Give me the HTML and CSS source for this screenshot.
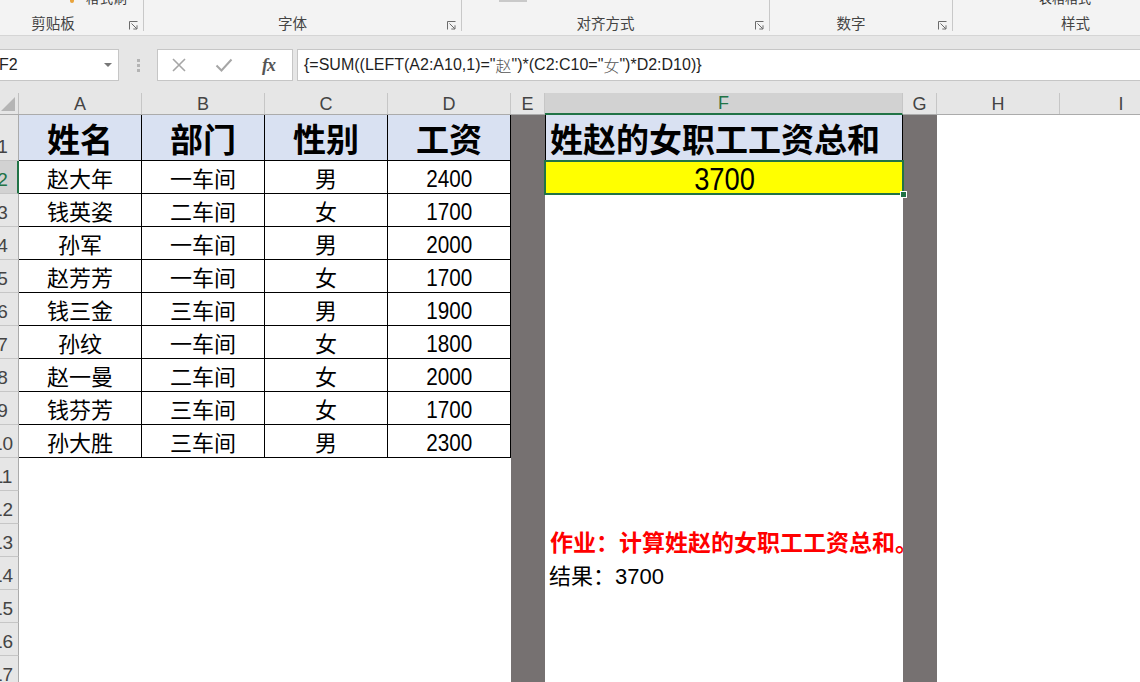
FILE: index.html
```html
<!DOCTYPE html>
<html lang="zh-CN">
<head>
<meta charset="utf-8">
<title>Excel</title>
<link rel="stylesheet" href="styles.css">
</head>
<body>
<div class="ribbon">
  <div class="group g1">
    <div class="gtop"><span class="cut dot1">·</span><span class="brush"></span><span class="cut brush-t">格式刷</span></div>
    <div class="glabel"><span class="lbl">剪贴板</span><svg class="launch" viewBox="0 0 9 9"><path d="M0.5 8.5V0.5H8.5" /><path d="M2.5 2.5L7.8 7.8M8 4.3V8H4.3" /></svg></div>
  </div>
  <div class="group g2">
    <div class="gtop"></div>
    <div class="glabel"><span class="lbl">字体</span><svg class="launch" viewBox="0 0 9 9"><path d="M0.5 8.5V0.5H8.5" /><path d="M2.5 2.5L7.8 7.8M8 4.3V8H4.3" /></svg></div>
  </div>
  <div class="group g3">
    <div class="gtop"><span class="bar3"></span></div>
    <div class="glabel"><span class="lbl">对齐方式</span><svg class="launch" viewBox="0 0 9 9"><path d="M0.5 8.5V0.5H8.5" /><path d="M2.5 2.5L7.8 7.8M8 4.3V8H4.3" /></svg></div>
  </div>
  <div class="group g4">
    <div class="gtop"></div>
    <div class="glabel"><span class="lbl">数字</span><svg class="launch" viewBox="0 0 9 9"><path d="M0.5 8.5V0.5H8.5" /><path d="M2.5 2.5L7.8 7.8M8 4.3V8H4.3" /></svg></div>
  </div>
  <div class="group g5">
    <div class="gtop"><span class="cut dot5">·</span><span class="cut table-t">表格格式 ·</span></div>
    <div class="glabel nolaunch"><span class="lbl">样式</span></div>
  </div>
</div>

<div class="fbar">
  <div class="namebox"><span class="nb-text">F2</span><span class="nb-arrow"></span></div>
  <div class="grip"><span></span><span></span><span></span></div>
  <div class="fbtns">
    <svg class="fx-x" viewBox="0 0 16 16"><path d="M2 2L14 14M14 2L2 14" /></svg>
    <svg class="fx-ok" viewBox="0 0 18 16"><path d="M1.5 8.5L6.5 13.5L16.5 2.5" /></svg>
    <span class="fx">fx</span>
  </div>
  <div class="finput">{=SUM((LEFT(A2:A10,1)="<span class="cjk">赵</span>")*(C2:C10="<span class="cjk">女</span>")*D2:D10)}</div>
</div>

<div class="sheet">
  <div class="row hdr">
    <div class="corner"><svg viewBox="0 0 14 14"><path d="M14 0V14H0Z" /></svg></div>
    <div class="chd w-a">A</div>
    <div class="chd w-a">B</div>
    <div class="chd w-a">C</div>
    <div class="chd w-a">D</div>
    <div class="chd w-e">E</div>
    <div class="chd w-f sel">F</div>
    <div class="chd w-e">G</div>
    <div class="chd w-a">H</div>
    <div class="chd w-a">I</div>
  </div>

  <div class="row r1">
    <div class="rh"><span>1</span></div>
    <div class="c w-a d th">姓名</div>
    <div class="c w-a d th">部门</div>
    <div class="c w-a d th">性别</div>
    <div class="c w-a d th">工资</div>
    <div class="c w-e gray"></div>
    <div class="c w-f thf">姓赵的女职工工资总和</div>
    <div class="c w-e gray"></div>
    <div class="c w-a"></div>
    <div class="c w-a"></div>
  </div>

  <div class="row">
    <div class="rh rsel"><span>2</span></div>
    <div class="c w-a d">赵大年</div>
    <div class="c w-a d">一车间</div>
    <div class="c w-a d">男</div>
    <div class="c w-a d"><span class="num">2400</span></div>
    <div class="c w-e gray"></div>
    <div class="c w-f result"><span class="bignum">3700</span><span class="selbox"><span class="handle"></span></span></div>
    <div class="c w-e gray"></div>
    <div class="c w-a"></div>
    <div class="c w-a"></div>
  </div>

  <div class="row">
    <div class="rh"><span>3</span></div>
    <div class="c w-a d">钱英姿</div>
    <div class="c w-a d">二车间</div>
    <div class="c w-a d">女</div>
    <div class="c w-a d"><span class="num">1700</span></div>
    <div class="c w-e gray"></div>
    <div class="c w-f"></div>
    <div class="c w-e gray"></div>
    <div class="c w-a"></div>
    <div class="c w-a"></div>
  </div>

  <div class="row">
    <div class="rh"><span>4</span></div>
    <div class="c w-a d">孙军</div>
    <div class="c w-a d">一车间</div>
    <div class="c w-a d">男</div>
    <div class="c w-a d"><span class="num">2000</span></div>
    <div class="c w-e gray"></div>
    <div class="c w-f"></div>
    <div class="c w-e gray"></div>
    <div class="c w-a"></div>
    <div class="c w-a"></div>
  </div>

  <div class="row">
    <div class="rh"><span>5</span></div>
    <div class="c w-a d">赵芳芳</div>
    <div class="c w-a d">一车间</div>
    <div class="c w-a d">女</div>
    <div class="c w-a d"><span class="num">1700</span></div>
    <div class="c w-e gray"></div>
    <div class="c w-f"></div>
    <div class="c w-e gray"></div>
    <div class="c w-a"></div>
    <div class="c w-a"></div>
  </div>

  <div class="row">
    <div class="rh"><span>6</span></div>
    <div class="c w-a d">钱三金</div>
    <div class="c w-a d">三车间</div>
    <div class="c w-a d">男</div>
    <div class="c w-a d"><span class="num">1900</span></div>
    <div class="c w-e gray"></div>
    <div class="c w-f"></div>
    <div class="c w-e gray"></div>
    <div class="c w-a"></div>
    <div class="c w-a"></div>
  </div>

  <div class="row">
    <div class="rh"><span>7</span></div>
    <div class="c w-a d">孙纹</div>
    <div class="c w-a d">一车间</div>
    <div class="c w-a d">女</div>
    <div class="c w-a d"><span class="num">1800</span></div>
    <div class="c w-e gray"></div>
    <div class="c w-f"></div>
    <div class="c w-e gray"></div>
    <div class="c w-a"></div>
    <div class="c w-a"></div>
  </div>

  <div class="row">
    <div class="rh"><span>8</span></div>
    <div class="c w-a d">赵一曼</div>
    <div class="c w-a d">二车间</div>
    <div class="c w-a d">女</div>
    <div class="c w-a d"><span class="num">2000</span></div>
    <div class="c w-e gray"></div>
    <div class="c w-f"></div>
    <div class="c w-e gray"></div>
    <div class="c w-a"></div>
    <div class="c w-a"></div>
  </div>

  <div class="row">
    <div class="rh"><span>9</span></div>
    <div class="c w-a d">钱芬芳</div>
    <div class="c w-a d">三车间</div>
    <div class="c w-a d">女</div>
    <div class="c w-a d"><span class="num">1700</span></div>
    <div class="c w-e gray"></div>
    <div class="c w-f"></div>
    <div class="c w-e gray"></div>
    <div class="c w-a"></div>
    <div class="c w-a"></div>
  </div>

  <div class="row">
    <div class="rh"><span>10</span></div>
    <div class="c w-a d">孙大胜</div>
    <div class="c w-a d">三车间</div>
    <div class="c w-a d">男</div>
    <div class="c w-a d"><span class="num">2300</span></div>
    <div class="c w-e gray"></div>
    <div class="c w-f"></div>
    <div class="c w-e gray"></div>
    <div class="c w-a"></div>
    <div class="c w-a"></div>
  </div>

  <div class="row">
    <div class="rh"><span>11</span></div>
    <div class="c w-blank"></div>
    <div class="c w-e gray"></div>
    <div class="c w-f"></div>
    <div class="c w-e gray"></div>
  </div>

  <div class="row">
    <div class="rh"><span>12</span></div>
    <div class="c w-blank"></div>
    <div class="c w-e gray"></div>
    <div class="c w-f"></div>
    <div class="c w-e gray"></div>
  </div>

  <div class="row">
    <div class="rh"><span>13</span></div>
    <div class="c w-blank"></div>
    <div class="c w-e gray"></div>
    <div class="c w-f note">作业：计算姓赵的女职工工资总和。</div>
    <div class="c w-e gray"></div>
  </div>

  <div class="row">
    <div class="rh"><span>14</span></div>
    <div class="c w-blank"></div>
    <div class="c w-e gray"></div>
    <div class="c w-f answer">结果：3700</div>
    <div class="c w-e gray"></div>
  </div>

  <div class="row">
    <div class="rh"><span>15</span></div>
    <div class="c w-blank"></div>
    <div class="c w-e gray"></div>
    <div class="c w-f"></div>
    <div class="c w-e gray"></div>
  </div>

  <div class="row">
    <div class="rh"><span>16</span></div>
    <div class="c w-blank"></div>
    <div class="c w-e gray"></div>
    <div class="c w-f"></div>
    <div class="c w-e gray"></div>
  </div>

  <div class="row">
    <div class="rh"><span>17</span></div>
    <div class="c w-blank"></div>
    <div class="c w-e gray"></div>
    <div class="c w-f"></div>
    <div class="c w-e gray"></div>
  </div>
</div>
</body>
</html>
```

FILE: styles.css
```css
* { box-sizing: border-box; }

body {
  margin: 0;
  width: 1140px;
  height: 682px;
  overflow: hidden;
  background: #ffffff;
  font-family: "Liberation Sans", "Noto Sans CJK SC", sans-serif;
  color: #000;
}

/* ---------- ribbon ---------- */
.ribbon {
  height: 36px;
  background: #f3f3f3;
  border-bottom: 1px solid #d5d5d5;
  display: flex;
  align-items: flex-start;
  overflow: hidden;
}

.group {
  flex: none;
  height: 31px;
  border-right: 1px solid #c8c8c8;
  display: flex;
  flex-direction: column;
}

.g1 { width: 161px; margin-left: -17px; }
.g2 { width: 318px; }
.g3 { width: 308px; }
.g4 { width: 183px; }
.g5 { width: 245px; border-right: none; }

.gtop {
  height: 15px;
  display: flex;
  align-items: flex-start;
  overflow: hidden;
}

.cut {
  font-family: "Noto Sans CJK SC", sans-serif;
  font-size: 13px;
  line-height: 14px;
  margin-top: -9px;
  color: #333;
  white-space: nowrap;
}

.dot1 { margin-left: 41px; }
.brush {
  width: 4px;
  height: 3px;
  margin-left: 33px;
  background: #e8a33c;
  border-radius: 0 0 2px 2px;
}
.brush-t { margin-left: 12px; letter-spacing: 1px; }

.bar3 {
  width: 28px;
  height: 2px;
  margin-left: 37px;
  background: #c9c9c9;
}

.dot5 { margin-left: 43px; }
.table-t { margin-left: 30px; }

.glabel {
  flex: 1;
  display: flex;
  align-items: center;
  padding-top: 1px;
}

.lbl {
  flex: 1;
  text-align: center;
  font-family: "Noto Sans CJK SC", sans-serif;
  font-size: 14.5px;
  line-height: 16px;
  color: #444;
}

.launch {
  flex: none;
  width: 9px;
  height: 9px;
  margin: 5px 5px 0 6px;
  fill: none;
  stroke: #6b6b6b;
  stroke-width: 1;
}

/* ---------- formula bar ---------- */
.fbar {
  height: 57px;
  background: #e6e6e6;
  display: flex;
  align-items: flex-start;
  padding-top: 13px;
}

.namebox {
  flex: none;
  width: 119px;
  height: 32px;
  background: #fff;
  border: 1px solid #c6c6c6;
  border-left: none;
  display: flex;
  align-items: center;
  justify-content: space-between;
  padding-right: 6px;
}

.nb-text {
  font-size: 16px;
  color: #222;
  margin-left: -1px;
}

.nb-arrow {
  width: 0;
  height: 0;
  border-left: 4px solid transparent;
  border-right: 4px solid transparent;
  border-top: 4px solid #777;
}

.grip {
  flex: none;
  width: 38px;
  height: 32px;
  display: flex;
  flex-direction: column;
  align-items: center;
  justify-content: center;
  gap: 2px;
}

.grip span {
  width: 3px;
  height: 3px;
  background: #b4b4b4;
}

.fbtns {
  flex: none;
  width: 136px;
  height: 32px;
  background: #fff;
  border: 1px solid #c6c6c6;
  display: flex;
  align-items: center;
  padding-left: 13px;
}

.fx-x {
  width: 16px;
  height: 16px;
  fill: none;
  stroke: #a6a6a6;
  stroke-width: 1.6;
}

.fx-ok {
  width: 18px;
  height: 16px;
  margin-left: 28px;
  fill: none;
  stroke: #a6a6a6;
  stroke-width: 2;
}

.fx {
  margin-left: 29px;
  font-family: "Liberation Serif", serif;
  font-style: italic;
  font-weight: bold;
  font-size: 18px;
  color: #555;
  letter-spacing: -1px;
}

.finput {
  flex: 1;
  height: 32px;
  margin-left: 4px;
  background: #fff;
  border: 1px solid #c6c6c6;
  border-right: none;
  display: flex;
  align-items: center;
  padding-left: 6px;
  font-size: 16px;
  color: #1f1f1f;
  white-space: pre;
}

.cjk {
  font-family: "Noto Sans CJK SC", sans-serif;
  font-weight: 300;
  color: #555;
}

/* ---------- sheet ---------- */
.sheet {
  display: flex;
  flex-direction: column;
}

.row {
  display: flex;
  height: 33px;
  flex: none;
}

.row > * { flex: none; }

.hdr {
  height: 22px;
  background: #e6e6e6;
  border-bottom: 1px solid #ababab;
}

.r1 { height: 46px; }

.corner {
  width: 19px;
  border-right: 1px solid #c0c0c0;
  display: flex;
  align-items: flex-end;
  justify-content: flex-end;
  padding: 0 3px 3px 0;
}

.corner svg {
  width: 14px;
  height: 14px;
  fill: #b5b5b5;
}

.chd {
  border-right: 1px solid #c6c6c6;
  display: flex;
  align-items: center;
  justify-content: center;
  font-size: 18px;
  color: #444;
  padding-top: 1px;
}

.chd.sel {
  background: #d2d2d2;
  color: #217346;
  border-bottom: 2px solid #217346;
  margin-bottom: -1px;
}

.w-a { width: 123px; }
.w-e { width: 34px; }
.w-f { width: 358px; }
.w-blank { width: 492px; }

.rh {
  width: 19px;
  background: #e6e6e6;
  border-right: 1px solid #ababab;
  border-bottom: 1px solid #c6c6c6;
  overflow: hidden;
  display: flex;
  align-items: flex-end;
}

.rh span {
  flex: none;
  width: 31px;
  margin-left: -13px;
  text-align: center;
  font-size: 19px;
  line-height: 20px;
  padding-bottom: 3px;
  color: #444;
}

.rh.rsel {
  background: #d2d2d2;
  border-right: 2px solid #217346;
}

.rh.rsel span { color: #217346; }

.c {
  display: flex;
  align-items: center;
  white-space: nowrap;
}

.d {
  justify-content: center;
  border-right: 1px solid #000;
  border-bottom: 1px solid #000;
  font-size: 22px;
}

.num {
  display: inline-block;
  font-size: 23.5px;
  transform: scaleX(0.88);
  padding-top: 5px;
}

.th {
  background: #d9e1f2;
  font-family: "Noto Sans CJK SC", sans-serif;
  font-weight: bold;
  font-size: 33px;
}

.gray { background: #767171; }

.thf {
  background: #d9e1f2;
  border-left: 1px solid #000;
  border-right: 1px solid #000;
  border-bottom: 1px solid #000;
  padding-left: 4px;
  font-family: "Noto Sans CJK SC", sans-serif;
  font-weight: bold;
  font-size: 33px;
}

.result {
  position: relative;
  background: #ffff00;
  justify-content: center;
}

.bignum {
  display: inline-block;
  font-size: 31px;
  transform: scaleX(0.88);
  padding-top: 5px;
}

.selbox {
  position: absolute;
  left: -1px;
  top: -1px;
  right: -1px;
  bottom: -1px;
  border: 2px solid #217346;
}

.handle {
  position: absolute;
  right: -5px;
  bottom: -5px;
  width: 7px;
  height: 7px;
  background: #217346;
  border: 1px solid #fff;
}

.note {
  padding-left: 5px;
  font-family: "Noto Sans CJK SC", sans-serif;
  font-weight: bold;
  font-size: 23px;
  color: #ff0000;
  overflow: visible;
}

.answer {
  padding-left: 4px;
  font-size: 22px;
}
```
